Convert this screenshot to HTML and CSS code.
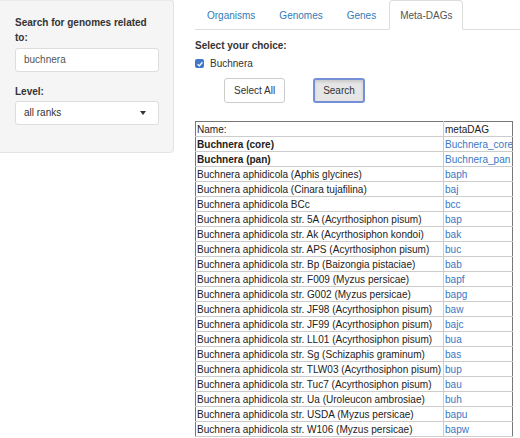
FILE: index.html
```html
<!DOCTYPE html>
<html>
<head>
<meta charset="utf-8">
<link rel="stylesheet" href="styles.css">
</head>
<body>
<div class="page">
  <aside class="sidebar">
    <div class="panel">
      <label class="lbl">Search for genomes related to:</label>
      <div class="input">buchnera</div>
      <label class="lbl lbl-level">Level:</label>
      <div class="select"><span>all ranks</span><span class="caret"></span></div>
    </div>
  </aside>
  <main class="main">
    <nav class="tabs">
      <span class="tab">Organisms</span>
      <span class="tab">Genomes</span>
      <span class="tab">Genes</span>
      <span class="tab active">Meta-DAGs</span>
    </nav>
    <div class="choice">
      <div class="lbl">Select your choice:</div>
      <div class="check"><span class="box"><svg viewBox="0 0 10 10" width="8" height="8"><path d="M2 5.2 L4.2 7.3 L8 2.8" fill="none" stroke="#fff" stroke-width="1.6"/></svg></span>Buchnera</div>
      <div class="buttons">
        <span class="btn">Select All</span>
        <span class="btn btn-focus">Search</span>
      </div>
    </div>
    <table class="tbl">
      <tr><td>Name:</td><td>metaDAG</td></tr>
      <tr><td class="b">Buchnera (core)</td><td><a>Buchnera_core</a></td></tr>
      <tr><td class="b">Buchnera (pan)</td><td><a>Buchnera_pan</a></td></tr>
      <tr><td>Buchnera aphidicola (Aphis glycines)</td><td><a>baph</a></td></tr>
      <tr><td>Buchnera aphidicola (Cinara tujafilina)</td><td><a>baj</a></td></tr>
      <tr><td>Buchnera aphidicola BCc</td><td><a>bcc</a></td></tr>
      <tr><td>Buchnera aphidicola str. 5A (Acyrthosiphon pisum)</td><td><a>bap</a></td></tr>
      <tr><td>Buchnera aphidicola str. Ak (Acyrthosiphon kondoi)</td><td><a>bak</a></td></tr>
      <tr><td>Buchnera aphidicola str. APS (Acyrthosiphon pisum)</td><td><a>buc</a></td></tr>
      <tr><td>Buchnera aphidicola str. Bp (Baizongia pistaciae)</td><td><a>bab</a></td></tr>
      <tr><td>Buchnera aphidicola str. F009 (Myzus persicae)</td><td><a>bapf</a></td></tr>
      <tr><td>Buchnera aphidicola str. G002 (Myzus persicae)</td><td><a>bapg</a></td></tr>
      <tr><td>Buchnera aphidicola str. JF98 (Acyrthosiphon pisum)</td><td><a>baw</a></td></tr>
      <tr><td>Buchnera aphidicola str. JF99 (Acyrthosiphon pisum)</td><td><a>bajc</a></td></tr>
      <tr><td>Buchnera aphidicola str. LL01 (Acyrthosiphon pisum)</td><td><a>bua</a></td></tr>
      <tr><td>Buchnera aphidicola str. Sg (Schizaphis graminum)</td><td><a>bas</a></td></tr>
      <tr><td>Buchnera aphidicola str. TLW03 (Acyrthosiphon pisum)</td><td><a>bup</a></td></tr>
      <tr><td>Buchnera aphidicola str. Tuc7 (Acyrthosiphon pisum)</td><td><a>bau</a></td></tr>
      <tr><td>Buchnera aphidicola str. Ua (Uroleucon ambrosiae)</td><td><a>buh</a></td></tr>
      <tr><td>Buchnera aphidicola str. USDA (Myzus persicae)</td><td><a>bapu</a></td></tr>
      <tr><td>Buchnera aphidicola str. W106 (Myzus persicae)</td><td><a>bapw</a></td></tr>
    </table>
  </main>
</div>
</body>
</html>
```
FILE: styles.css
```css
* { box-sizing: border-box; }
html, body { margin: 0; padding: 0; background: #fff; }
body {
  font-family: "Liberation Sans", Arial, sans-serif;
  font-size: 10px;
  color: #333;
  width: 520px;
  height: 438px;
  overflow: hidden;
}
.page { display: flex; align-items: flex-start; }
.sidebar { width: 180px; flex: none; }
.panel {
  width: 178px;
  margin-left: -4px;
  margin-top: -1px;
  height: 154px;
  background: #f5f5f5;
  border: 1px solid #e3e3e3;
  border-radius: 4px;
  padding: 15px 14px 0 18px;
  box-shadow: inset 0 1px 1px rgba(0,0,0,.05);
}
.lbl { display: block; font-weight: bold; font-size: 10px; line-height: 15px; color: #333; }
.input {
  margin-top: 3px;
  height: 24px;
  width: 144px;
  background: #fff;
  border: 1px solid #ddd;
  border-radius: 3px;
  padding: 0 8px;
  line-height: 22px;
  font-size: 10px;
  color: #555;
}
.lbl-level { margin-top: 12px; }
.select {
  margin-top: 2px;
  height: 24px;
  width: 144px;
  background: #fff;
  border: 1px solid #ddd;
  border-radius: 3px;
  padding: 0 8px;
  line-height: 22px;
  font-size: 10px;
  color: #333;
  display: flex;
  justify-content: space-between;
  align-items: center;
}
.caret {
  width: 0; height: 0;
  border-left: 3.5px solid transparent;
  border-right: 3.5px solid transparent;
  border-top: 4px solid #333;
  margin-right: 4px;
}
.main { flex: 1; padding-left: 15px; }
.tabs {
  display: flex;
  gap: 2px;
  border-bottom: 1px solid #ddd;
  height: 30px;
  padding-left: 1px;
}
.tab {
  padding: 0 10px;
  line-height: 29px;
  color: #337ab7;
  font-size: 10px;
  border: 1px solid transparent;
  border-radius: 4px 4px 0 0;
  height: 30px;
}
.tab.active {
  color: #555;
  background: #fff;
  border-color: #ddd #ddd transparent #ddd;
}
.choice { padding-top: 8px; }
.check {
  display: flex;
  align-items: center;
  margin-top: 3px;
  font-size: 10px;
  line-height: 15px;
}
.box {
  width: 9px; height: 9px;
  background: #3f78c8;
  border-radius: 2px;
  margin-right: 6px;
  display: flex; align-items: center; justify-content: center;
}
.buttons { display: flex; gap: 28px; margin-top: 7px; padding-left: 29px; }
.btn {
  display: inline-block;
  height: 25px;
  line-height: 23px;
  padding: 0 9px;
  border: 1px solid #ccc;
  border-radius: 3px;
  background: #fff;
  font-size: 10px;
  color: #333;
}
.btn-focus {
  background: #e6e6e6;
  border: 2px solid #7590d6;
  line-height: 21px;
  padding: 0 8px;
  box-shadow: inset 0 2px 3px rgba(0,0,0,.12);
}
.tbl {
  margin-top: 18px;
  border-collapse: collapse;
  border: 1px solid #777;
  width: 318px;
  font-size: 10.05px;
  table-layout: fixed;
}
.tbl td {
  border: 1px solid #ccc;
  height: 15px;
  line-height: 13px;
  padding: 0 1px;
  white-space: nowrap;
  overflow: hidden;
  color: #222;
}
.tbl tr:first-child td { border-top-color: #777; }
.tbl td:first-child { width: 248px; border-left-color: #777; }
.tbl td:last-child { border-right-color: #777; }
.tbl td.b { font-weight: bold; }
.tbl a { color: #3a78c2; }
```
